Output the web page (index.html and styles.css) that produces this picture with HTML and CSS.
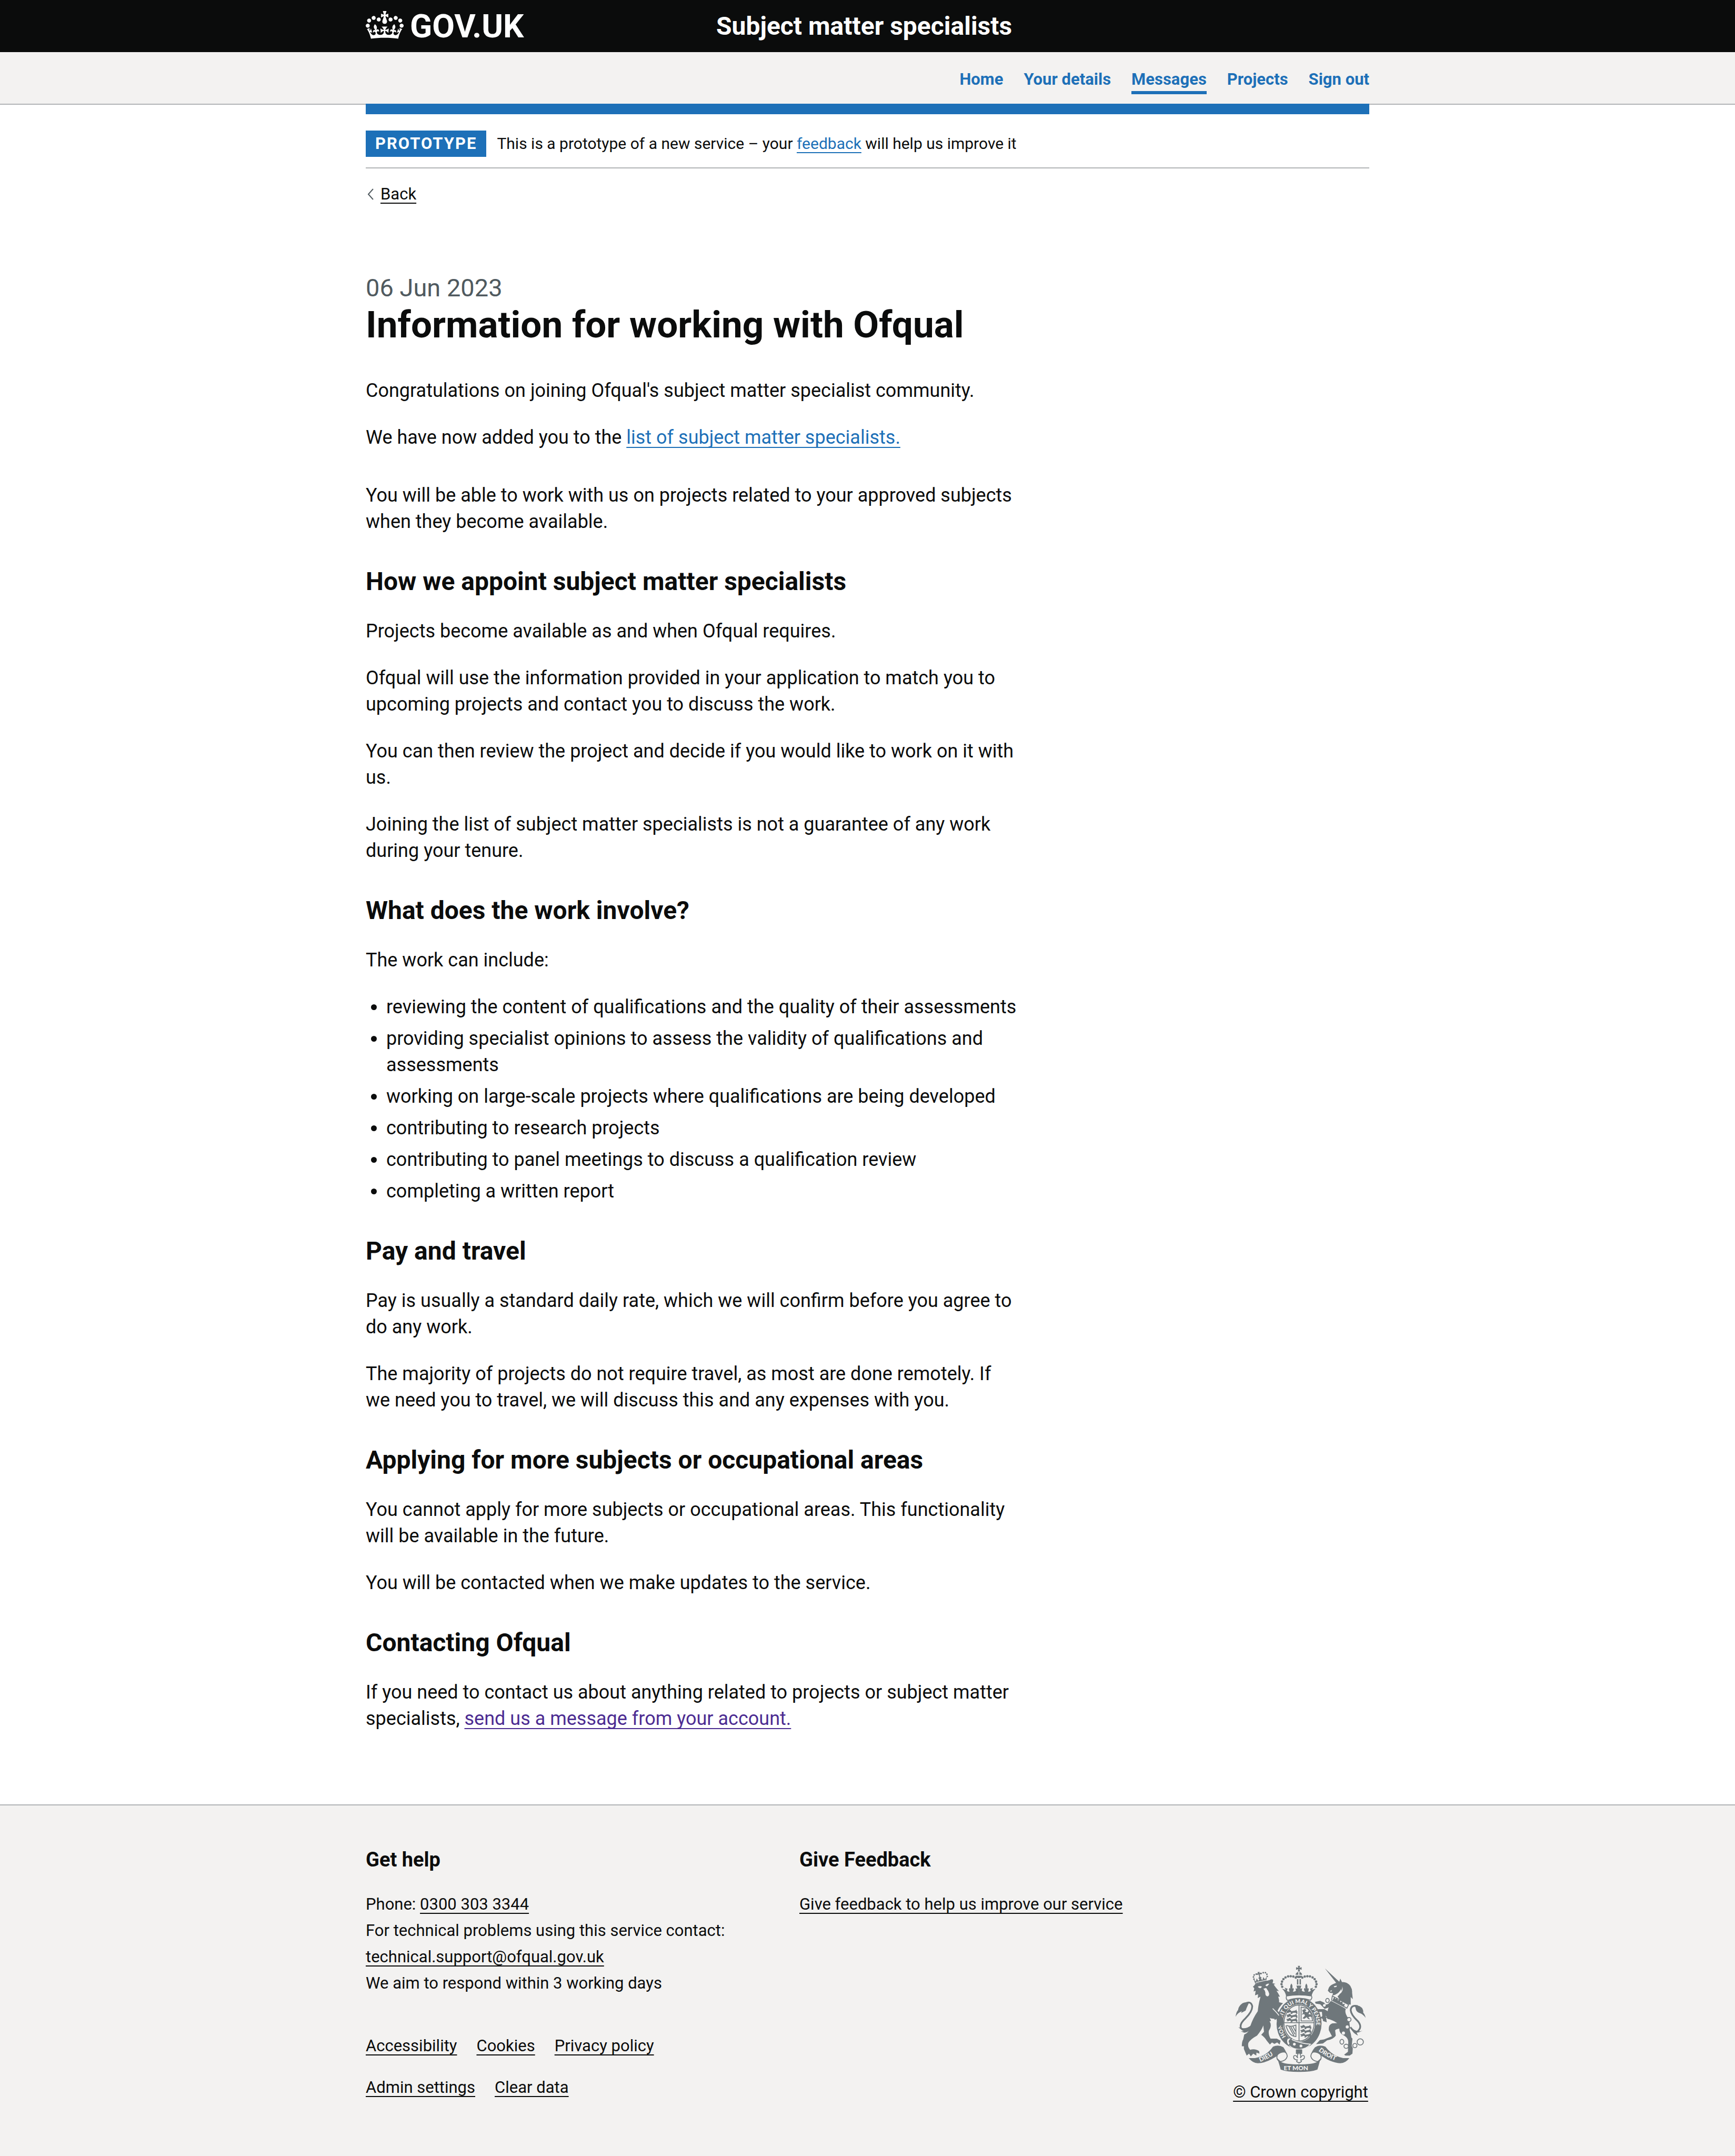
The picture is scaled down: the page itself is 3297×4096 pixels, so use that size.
FILE: index.html
```html
<!DOCTYPE html>
<html lang="en">
<head>
<meta charset="utf-8">
<meta name="viewport" content="width=device-width, initial-scale=1">
<title>Information for working with Ofqual</title>
<link rel="stylesheet" href="styles.css">
</head>
<body>
<header class="header">
  <div class="container header-inner">
    <a class="logo" href="#">
      <svg class="logo-crown" viewBox="0 0 132 97" aria-hidden="true"><path fill="currentColor" fill-rule="evenodd" d="M25 30.2c3.5 1.5 7.7-.2 9.1-3.7 1.5-3.6-.2-7.8-3.9-9.2-3.6-1.4-7.6.3-9.1 3.9-1.4 3.5.3 7.5 3.9 9zM9 39.5c3.6 1.5 7.8-.2 9.2-3.7 1.5-3.6-.2-7.8-3.9-9.1-3.6-1.5-7.6.2-9.1 3.8-1.4 3.5.3 7.5 3.8 9zM4.4 57.2c3.5 1.5 7.7-.2 9.1-3.8 1.5-3.6-.2-7.7-3.9-9.1-3.5-1.5-7.6.3-9.1 3.8-1.4 3.5.3 7.6 3.9 9.1zm38.3-21.4c3.5 1.5 7.7-.2 9.1-3.8 1.5-3.6-.2-7.7-3.9-9.1-3.6-1.5-7.6.3-9.1 3.8-1.3 3.6.4 7.7 3.9 9.1zm64.4-5.6c-3.6 1.5-7.8-.2-9.1-3.7-1.5-3.6.2-7.8 3.8-9.2 3.6-1.4 7.7.3 9.2 3.9 1.3 3.5-.4 7.5-3.9 9zm15.9 9.3c-3.6 1.5-7.7-.2-9.1-3.7-1.5-3.6.2-7.8 3.7-9.1 3.6-1.5 7.7.2 9.2 3.8 1.5 3.5-.3 7.5-3.8 9zm4.7 17.7c-3.6 1.5-7.8-.2-9.2-3.8-1.5-3.6.2-7.7 3.9-9.1 3.6-1.5 7.7.3 9.2 3.8 1.3 3.5-.4 7.6-3.9 9.1zM89.3 35.8c-3.6 1.5-7.8-.2-9.2-3.8-1.4-3.6.2-7.7 3.9-9.1 3.6-1.5 7.7.3 9.2 3.8 1.4 3.6-.3 7.7-3.9 9.1zM69.7 17.7l8.9 4.7V9.3l-8.9 2.8c-.2-.3-.5-.6-.9-.9L72.4 0H59.6l3.5 11.2c-.3.3-.6.5-.9.9l-8.8-2.8v13.1l8.8-4.7c.3.3.6.7.9.9l-5 15.4v.1c-.2.8-.4 1.6-.4 2.4 0 4.1 3.1 7.5 7 8.1h.2c.3 0 .7.1 1 .1.4 0 .7 0 1-.1h.2c4-.6 7.1-4.1 7.1-8.1 0-.8-.1-1.7-.4-2.4V34l-5.1-15.4c.4-.2.7-.6 1-.9zM66 92.8c16.9 0 32.8 1.1 47.1 3.2 4-16.9 8.9-26.7 14-33.5l-9.6-3.4c1 4.9 1.1 7.2 0 10.2-1.5-1.4-3-4.3-4.2-8.7L108.6 76c2.8-2 5-3.2 7.5-3.3-4.4 9.4-10 11.9-13.6 11.2-4.3-.8-6.3-4.6-5.6-7.9 1-4.7 5.7-5.9 8-.5 4.3-8.7-3-11.4-7.6-8.8 7.1-7.2 7.9-13.5 2.1-21.1-8 6.1-8.1 12.3-4.5 20.8-4.7-5.4-12.1-2.5-9.5 6.2 3.4-5.2 7.9-2 7.2 3.1-.6 4.3-6.4 7.8-13.5 7.2-10.3-.9-10.9-8-11.2-13.8 2.5-.5 7.1 1.8 11 7.3L80.2 60c-4.1 4.4-8 5.3-12.3 5.4 1.4-4.4 8-11.6 8-11.6H55.5s6.4 7.2 7.9 11.6c-4.2-.1-8-1-12.3-5.4l1.4 16.4c3.9-5.5 8.5-7.7 10.9-7.3-.3 5.8-.9 12.8-11.1 13.8-7.2.6-12.9-2.9-13.5-7.2-.7-5 3.8-8.3 7.1-3.1 2.7-8.7-4.6-11.6-9.4-6.2 3.7-8.5 3.6-14.7-4.6-20.8-5.8 7.6-5 13.9 2.2 21.1-4.7-2.6-11.9.1-7.7 8.8 2.3-5.5 7.1-4.2 8.1.5.7 3.3-1.3 7.1-5.7 7.9-3.5.7-9-1.8-13.5-11.2 2.5.1 4.7 1.3 7.5 3.3l-4.7-15.4c-1.2 4.4-2.7 7.2-4.3 8.7-1.1-3-.9-5.3 0-10.2l-9.5 3.4c5 6.9 9.9 16.7 14 33.5 14.8-2.1 30.8-3.2 47.7-3.2z"/></svg>
      <span>GOV.UK</span>
    </a>
    <a class="service-name" href="#">Subject matter specialists</a>
  </div>
</header>
<div class="nav-strip">
  <nav class="container" aria-label="Menu">
    <ul class="nav">
      <li><a class="nav-link" href="#">Home</a></li>
      <li><a class="nav-link" href="#">Your details</a></li>
      <li><a class="nav-link nav-link-current" href="#" aria-current="page">Messages</a></li>
      <li><a class="nav-link" href="#">Projects</a></li>
      <li><a class="nav-link" href="#">Sign out</a></li>
    </ul>
  </nav>
</div>
<div class="container page">
  <div class="phase-banner">
    <strong class="tag">PROTOTYPE</strong>
    <span>This is a prototype of a new service – your <a class="link" href="#">feedback</a> will help us improve it</span>
  </div>
  <a class="back-link" href="#">
    <svg class="back-icon" viewBox="0 0 12 22" aria-hidden="true"><path d="M11 1 2 11l9 10" fill="none" stroke="#505a5f" stroke-width="2"/></svg>
    <span class="link link-dark">Back</span>
  </a>
  <main class="content">
    <span class="caption">06 Jun 2023</span>
    <h1>Information for working with Ofqual</h1>
    <p>Congratulations on joining Ofqual's subject matter specialist community.</p>
    <p class="lead-out">We have now added you to the <a class="link" href="#">list of subject matter specialists.</a></p>
    <p>You will be able to work with us on projects related to your approved subjects when they become available.</p>
    <h2>How we appoint subject matter specialists</h2>
    <p>Projects become available as and when Ofqual requires.</p>
    <p>Ofqual will use the information provided in your application to match you to upcoming projects and contact you to discuss the work.</p>
    <p>You can then review the project and decide if you would like to work on it with us.</p>
    <p>Joining the list of subject matter specialists is not a guarantee of any work during your tenure.</p>
    <h2>What does the work involve?</h2>
    <p>The work can include:</p>
    <ul class="bullets">
      <li>reviewing the content of qualifications and the quality of their assessments</li>
      <li>providing specialist opinions to assess the validity of qualifications and assessments</li>
      <li>working on large-scale projects where qualifications are being developed</li>
      <li>contributing to research projects</li>
      <li>contributing to panel meetings to discuss a qualification review</li>
      <li>completing a written report</li>
    </ul>
    <h2>Pay and travel</h2>
    <p>Pay is usually a standard daily rate, which we will confirm before you agree to do any work.</p>
    <p>The majority of projects do not require travel, as most are done remotely. If we&nbsp;need you to travel, we will discuss this and any expenses with you.</p>
    <h2>Applying for more subjects or occupational areas</h2>
    <p>You cannot apply for more subjects or occupational areas. This functionality will be available in the future.</p>
    <p>You will be contacted when we make updates to the service.</p>
    <h2>Contacting Ofqual</h2>
    <p>If you need to contact us about anything related to projects or subject matter specialists, <a class="link link-visited" href="#">send us a message from your account.</a></p>
  </main>
</div>
<footer class="footer">
  <div class="container footer-inner">
    <div class="footer-main">
      <div class="footer-columns">
        <section>
          <h2>Get help</h2>
          <ul>
            <li>Phone: <a class="link link-dark" href="#">0300 303 3344</a></li>
            <li>For technical problems using this service contact:</li>
            <li><a class="link link-dark" href="#">technical.support@ofqual.gov.uk</a></li>
            <li>We aim to respond within 3 working days</li>
          </ul>
        </section>
        <section>
          <h2>Give Feedback</h2>
          <ul>
            <li><a class="link link-dark" href="#">Give feedback to help us improve our service</a></li>
          </ul>
        </section>
      </div>
      <ul class="footer-links">
        <li><a class="link link-dark" href="#">Accessibility</a></li>
        <li><a class="link link-dark" href="#">Cookies</a></li>
        <li><a class="link link-dark" href="#">Privacy policy</a></li>
      </ul>
      <ul class="footer-links">
        <li><a class="link link-dark" href="#">Admin settings</a></li>
        <li><a class="link link-dark" href="#">Clear data</a></li>
      </ul>
    </div>
    <a class="copyright" href="#">
      <svg class="crest" viewBox="100 58 754 616" aria-hidden="true">
        <defs>
          <path id="belt-arc" d="M404 480A99 116 0 1 1 532 480"/>
          <path id="scroll-left" d="M244 614Q300 592 348 556"/>
          <path id="scroll-right" d="M580 550Q630 592 704 616"/>
          <g id="dots" class="crest-ink">
            <circle cx="449" cy="128" r="7"/><circle cx="435" cy="122" r="7"/><circle cx="420" cy="120" r="7"/><circle cx="405" cy="121" r="7"/><circle cx="390" cy="127" r="7"/><circle cx="378" cy="137" r="7"/><circle cx="370" cy="151" r="7"/><circle cx="367" cy="166" r="7"/><circle cx="371" cy="181" r="7"/>
          </g>
          <path id="half-crown" class="crest-ink" d="M467 232Q425 232 394 238 392 212 370 192L392 198 384 186 402 192 398 204Q404 212 414 208 406 194 414 188L419 192Q414 176 424 162 434 176 428 192L434 188Q442 196 432 208 442 212 450 204L448 190 458 192 453 174 467 174Z"/>
          <path id="passant" class="crest-ink" d="M396 0h10l6-6 8 4 4 6 22-4 8-6v8l6 6-4 5 6 5h-10l-4-6-16 1-4 6h-10l4-8-10-1-6 4h-10l6-6-6-3z"/>
        </defs>
        <!-- royal crown -->
        <path class="crest-ink" d="M461 60h13l-3 12 12-4v15l-12-4 3 14h-13l3-14-13 4V68l13 4zM448 112Q450 98 464 95V112zM470 95Q484 98 486 112H470zM448 117H486Q484 130 467 131 450 130 448 117zM456 137H464V168H456zM471 137H479V168H471z"/>
        <use href="#dots"/><use href="#dots" transform="matrix(-1 0 0 1 936 0)"/>
        <use href="#half-crown"/><use href="#half-crown" transform="matrix(-1 0 0 1 934 0)"/>
        <!-- garter and shield -->
        <ellipse class="crest-ink" cx="468" cy="392" rx="130" ry="148"/>
        <path class="crest-paper crest-line" d="M396 234Q467 222 540 234 546 246 534 258 468 236 402 260 390 248 396 234z"/>
        <ellipse class="crest-paper" cx="468" cy="390" rx="92" ry="109"/>
        <ellipse class="crest-line" cx="468" cy="390" rx="87" ry="104" fill="none"/>
        <path class="crest-line" d="M468 288V494M382 388H556" fill="none"/>
        <use href="#passant" y="318"/><use href="#passant" y="342"/><use href="#passant" y="366"/>
        <use href="#passant" x="80" y="406"/><use href="#passant" x="80" y="430"/><use href="#passant" x="80" y="454"/>
        <path class="crest-line" fill="none" d="M480 298V378H546Q542 330 516 306z"/>
        <path class="crest-ink" d="M486 316l16-8 8 8-8 8 14 4 8-10 6 8-8 12 16 4 4 16-10-6-10 4 10 14-12-4-8-10-14 10-10-4 14-14-4-10-14 4 8-12z"/>
        <path class="crest-line" fill="none" d="M396 404Q424 414 450 402V468Q412 468 392 404M410 410L440 466M420 410L444 454M432 408L448 438"/>
        <text class="crest-motto crest-motto-belt"><textPath href="#belt-arc" startOffset="16">HON SOIT QUI MAL Y PENSE</textPath></text>
        <path class="crest-ink crest-edge" d="M402 480Q420 472 432 488 480 508 534 512 512 540 470 542 432 540 412 520 392 510 402 480z"/>
        <circle class="crest-paper" cx="441" cy="512" r="8"/><circle class="crest-paper" cx="479" cy="522" r="8"/>
        <path class="crest-line crest-paper" d="M398 484Q410 470 426 480L416 486Q406 496 416 506L410 520Q392 510 398 484z"/>
        <!-- lion -->
        <g transform="rotate(-12 244 122)">
          <path class="crest-ink" d="M208 156L204 130l10 14 8-16 6 16 8-6-4-10 6-4V108l-10 2v-10l8 2-2-8h12l-2 8 8-2v10l-8-2v16l6 4-4 10 8 6 6-16 8 16 12-14-6 28z"/>
          <path class="crest-beads" fill="none" d="M206 130Q200 96 236 106M252 106Q290 96 284 130"/>
          <path class="crest-paper" d="M212 148H276V152H212z"/>
        </g>
        <path class="crest-ink" d="M202 180Q210 176 216 164 262 152 298 142 308 134 318 140 320 152 314 160L332 164 322 168Q332 184 352 206L338 204Q348 218 358 238L348 238Q356 262 352 270L376 276Q352 298 344 320 368 340 376 366 382 392 374 414L362 404 350 418 342 400 350 388Q332 386 326 366L300 362 318 378 298 380Q314 404 294 434 290 456 304 480L340 480 362 492 356 514 342 502 326 510 312 502 300 514 282 492Q268 470 250 458L266 440 262 404Q252 432 226 462 186 484 176 504 170 528 186 544 216 536 238 552L240 566 222 560 222 578 204 566 190 582 180 566 166 578 150 540 150 524 138 524Q138 496 146 484L152 456Q180 446 186 410 202 362 230 322 234 280 246 238L230 246 232 224 214 230 218 204 206 208 210 190z"/>
        <path class="crest-paper" d="M230 180Q244 174 254 180L248 188Q238 192 230 180zM274 172Q286 160 296 164L288 174Q280 182 274 172zM270 202L262 192 278 188 284 196Q292 206 296 220 296 236 284 236 272 232 274 214zM300 360L324 376 338 366Q344 390 332 404L310 392z"/>
        <path class="crest-edge" fill="none" d="M316 306Q340 330 352 346"/>
        <path class="crest-line crest-tail" fill="none" d="M158 278Q190 260 198 292 200 322 160 362 122 396 134 420 154 446 186 420"/>
        <path class="crest-ink" d="M102 354Q106 322 120 312L116 326Q114 296 142 276 156 268 180 272 166 300 160 318 142 328 134 332L138 322Q112 332 102 354zM118 414Q136 432 156 430 148 440 132 438L152 446Q174 446 186 424L190 404Q160 430 118 414z"/>
        <!-- unicorn -->
        <path class="crest-ink" d="M617 75L698 150 700 152 706 134 716 154Q744 152 764 176 776 196 774 214L778 252 766 240 766 284 748 280Q726 270 704 258L690 236Q712 218 712 192 694 226 660 232L664 218 646 216 634 204 640 186Q648 172 664 166L682 158z"/>
        <path class="crest-paper" d="M668 178L686 174 684 182 672 184zM646 206L658 200 654 210zM716 176Q726 216 662 232L660 238Q736 222 716 176z"/>
        <path class="crest-paper crest-line" d="M660 234L754 284 744 304 656 258z"/>
        <path class="crest-ink" d="M664 252l8-14 6 14 10-8 4 16 12-6 2 16 12-4 2 16 12-4-4 16-66-34z"/>
        <path class="crest-ink" d="M652 262Q700 286 738 308 728 330 752 362 764 392 760 430 768 452 770 474L776 480 772 522 778 534 776 566 760 578H736L728 572 750 556 752 500Q752 476 728 462 700 452 700 422 684 424 676 432L680 462Q668 482 630 490L606 508 566 512 588 488 612 484 658 466 640 432Q636 400 660 392L688 390Q658 370 632 366L622 346 628 386 606 378 604 366 590 360 602 350 600 326 574 326 578 310 614 310 634 322Q632 310 640 300L616 308 590 282 564 278 560 268 590 262 612 272 622 284 636 280z"/>
        <g class="crest-paper"><circle cx="752" cy="372" r="9"/><circle cx="746" cy="412" r="9"/><circle cx="724" cy="448" r="9"/><circle cx="614" cy="288" r="8"/></g>
        <g class="crest-line" fill="none"><ellipse cx="632" cy="260" rx="10" ry="12"/><ellipse cx="622" cy="346" rx="12" ry="13"/><ellipse cx="756" cy="370" rx="12" ry="12"/><ellipse cx="715" cy="498" rx="11" ry="14"/><ellipse cx="740" cy="524" rx="13" ry="12"/><ellipse cx="790" cy="520" rx="12" ry="12"/><circle cx="821" cy="499" r="18"/></g>
        <path class="crest-line crest-tail" fill="none" d="M806 292Q768 284 766 316 768 342 806 378 836 412 806 438 786 444 764 414"/>
        <path class="crest-ink" d="M786 290Q814 284 832 304 840 318 838 330 848 340 852 360 838 340 822 334 800 328 796 312 794 296 786 290zM776 428Q800 444 834 434 816 444 800 446L808 462Q780 450 768 424z"/>
        <!-- scroll and fleur-de-lis -->
        <path class="crest-ink" d="M178 592L214 592Q280 580 318 526 350 512 378 530 398 560 400 580L374 604Q350 610 342 592L342 580 310 598Q270 620 230 622 200 620 178 592zM758 592L722 592Q660 580 620 526 586 512 560 530 538 556 536 580L562 604Q584 610 594 592L592 576 630 600Q670 620 706 622 738 620 758 592z"/>
        <path class="crest-paper crest-line" d="M342 576Q334 604 362 612 394 606 400 582 398 552 372 558 352 562 342 576zM594 576Q602 604 574 612 542 606 536 582 538 552 564 558 584 562 594 576z"/>
        <path class="crest-ink" d="M356 606Q370 630 468 628 566 630 580 606L592 594Q582 632 574 658 540 672 468 672 396 672 362 658 356 632 342 592z"/>
        <path class="crest-ink" d="M450 542H486V568H450z"/>
        <path class="crest-paper crest-line" d="M468 560Q482 574 476 592 486 570 498 580 504 594 486 602H478L482 612 468 620 454 612 458 602H450Q432 594 438 580 450 570 460 592 454 574 468 560z"/>
        <text class="crest-motto" x="380" y="662">ET MON</text>
        <text class="crest-motto"><textPath href="#scroll-left">DIEU</textPath></text>
        <text class="crest-motto"><textPath href="#scroll-right">DROIT</textPath></text>
      </svg>
      <span class="link link-dark">© Crown copyright</span>
    </a>
  </div>
</footer>
</body>
</html>
```
FILE: styles.css
```css
:root {
  --black: #0b0c0c;
  --blue: #1d70b8;
  --grey-light: #f3f2f1;
  --grey-mid: #b1b4b6;
  --grey-dark: #505a5f;
  --crest: #6f777b;
}

* { box-sizing: border-box; }

body {
  margin: 0;
  background: #fff;
  color: var(--black);
  font-family: Roboto, "Liberation Sans", sans-serif;
  font-size: 36px;
  line-height: 50px;
}

h1, h2, p, ul { margin: 0; }
ul { padding: 0; list-style: none; }
svg { display: block; }

.container {
  width: calc(100% - 60px);
  max-width: 1907px;
  margin: 0 auto;
}

.link {
  color: var(--blue);
  text-decoration: underline;
  text-decoration-thickness: 2px;
  text-underline-offset: 6px;
  text-decoration-skip-ink: none;
}
.link-dark { color: var(--black); }
.link-visited { color: #4c2c92; }

/* Header */
.header { background: var(--black); }
.header-inner { display: flex; align-items: center; height: 99px; }
.logo {
  display: flex;
  flex: 0 0 666px;
  align-items: center;
  gap: 12px;
  color: #fff;
  font-size: 62px;
  font-weight: 700;
  text-decoration: none;
}
.logo-crown { width: 72px; height: 53px; margin-bottom: 4px; }
.service-name {
  color: #fff;
  font-size: 48px;
  font-weight: 700;
  text-decoration: none;
}

/* Navigation */
.nav-strip {
  background: var(--grey-light);
  border-bottom: 2px solid var(--grey-mid);
}
.nav {
  display: flex;
  justify-content: flex-end;
  gap: 39px;
  padding: 30px 0 18px;
}
.nav-link {
  display: block;
  border-bottom: 6px solid transparent;
  color: var(--blue);
  font-size: 31px;
  font-weight: 700;
  line-height: 44px;
  text-decoration: none;
}
.nav-link-current { border-color: var(--blue); }

/* Page */
.page {
  position: relative;
  margin-top: -2px;
  border-top: 20px solid var(--blue);
}
.phase-banner {
  display: flex;
  gap: 20px;
  padding: 31px 0 20px;
  border-bottom: 2px solid var(--grey-mid);
  font-size: 30px;
}
.tag {
  padding: 0 18px;
  background: var(--blue);
  color: #fff;
  font-size: 31px;
  font-weight: 700;
  letter-spacing: 2px;
}
.back-link {
  display: flex;
  align-items: center;
  gap: 13px;
  width: fit-content;
  margin-top: 29px;
  padding-left: 3px;
  font-size: 31px;
  line-height: 40px;
  text-decoration: none;
}
.back-icon { width: 12px; height: 22px; }

.content {
  max-width: 1251px;
  padding: 128px 0 99px;
}
.content p, .bullets { margin-bottom: 39px; }
.content .lead-out { margin-bottom: 60px; }
.caption {
  display: block;
  color: var(--grey-dark);
  font-size: 47px;
  line-height: 60px;
}
h1 {
  margin-bottom: 60px;
  font-size: 71px;
  line-height: 80px;
}
.content h2 {
  margin-bottom: 39px;
  padding-top: 20px;
  font-size: 48px;
  line-height: 60px;
}
.bullets { padding-left: 39px; list-style: disc; }
.bullets li + li { margin-top: 10px; }

/* Footer */
.footer {
  padding: 78px 0 96px;
  background: var(--grey-light);
  border-top: 2px solid var(--grey-mid);
  font-size: 31px;
}
.footer-inner { display: flex; gap: 58px; }
.footer-main { flex: 1; padding-bottom: 9px; }
.footer-columns {
  display: grid;
  grid-template-columns: 1fr 1fr;
  gap: 60px;
  margin-bottom: 69px;
}
.footer h2 { margin-bottom: 35px; font-size: 38px; line-height: 50px; }
.footer-links { display: flex; gap: 37px; }
.footer-links + .footer-links { margin-top: 29px; }
.copyright {
  display: flex;
  flex-direction: column;
  align-items: center;
  align-self: flex-end;
  gap: 13px;
  width: 261px;
  text-decoration: none;
  white-space: nowrap;
}
.crest { width: 249px; height: 203px; }
.crest-ink { fill: var(--crest); }
.crest-paper { fill: var(--grey-light); }
.crest-line { stroke: var(--crest); stroke-width: 5px; }
.crest-tail { stroke-width: 10px; }
.crest-edge { stroke: var(--grey-light); stroke-width: 5px; }
.crest-beads { stroke: var(--crest); stroke-width: 9px; stroke-linecap: round; stroke-dasharray: 1 12; }
.crest-motto { fill: var(--grey-light); font: 900 36px Lato, sans-serif; }
.crest-motto-belt { font-size: 32px; }
```
